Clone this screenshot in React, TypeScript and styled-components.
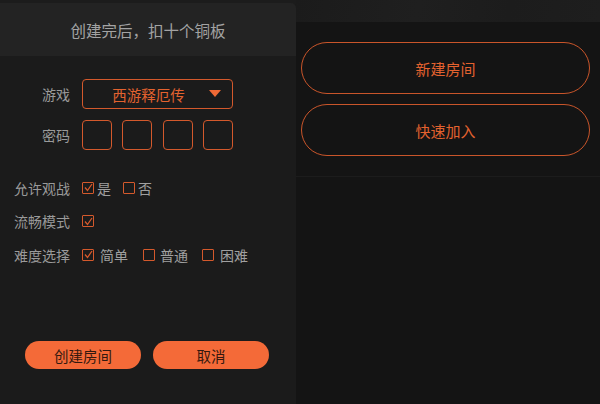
import React from "react"
import styled, { createGlobalStyle } from "styled-components"

const GlobalStyle = createGlobalStyle`
    html, body {
        margin: 0;
        padding: 0;
        background: #1c1c1c;
    }
    body {
        font-family: "Noto Sans CJK SC", "Noto Sans", sans-serif;
    }
    * {
        box-sizing: border-box;
    }
`

const Page = styled.div`
    width: 600px;
    height: 404px;
    overflow: hidden;
    background-color: #1c1c1c;

    display: flex;
    flex-flow: row nowrap;
`

// Left: create room panel
const CreatePanel = styled.div`
    width: 296px;
    margin-top: 3px;
    border-top-right-radius: 5px;
    overflow: hidden;
    background-color: #1b1b1b;

    display: flex;
    flex-flow: column;
`

const PanelHeader = styled.div`
    height: 53px;
    background-color: #232323;
    color: #a3a3a3;
    font-size: 15.5px;

    display: flex;
    align-items: center;
    justify-content: center;
`

const Form = styled.div`
    flex: 1;
    padding-top: 23px;

    display: flex;
    flex-flow: column;
`

const Row = styled.div<{ $height: number; $gap: number }>`
    height: ${p => p.$height}px;
    margin-bottom: ${p => p.$gap}px;

    display: flex;
    flex-flow: row nowrap;
    align-items: center;
`

const Label = styled.span`
    width: 70px;
    margin-right: 12px;
    text-align: right;
    color: #9a9a9a;
    font-size: 14px;
    white-space: nowrap;
`

const Select = styled.div`
    position: relative;
    width: 151px;
    height: 30px;
    padding-right: 18px;
    border: 1px solid #d4592c;
    border-radius: 4px;
    color: #e3622f;
    font-size: 14.5px;

    display: flex;
    align-items: center;
    justify-content: center;

    &::after {
        content: "";
        position: absolute;
        right: 11px;
        top: 10px;
        border-left: 6px solid transparent;
        border-right: 6px solid transparent;
        border-top: 7px solid #f06a36;
    }
`

const CodeBoxes = styled.div`
    display: flex;
    flex-flow: row nowrap;
    gap: 10.3px;
`

const CodeBox = styled.div`
    width: 30px;
    height: 30px;
    border: 1px solid #d4592c;
    border-radius: 4px;
`

const Option = styled.span<{ $gap: number; $after: number }>`
    margin-right: ${p => p.$after}px;
    color: #a0a0a0;
    font-size: 14px;

    display: flex;
    align-items: center;
    gap: ${p => p.$gap}px;
`

const Box = styled.span`
    width: 12px;
    height: 12px;
    border: 1.5px solid #d4592c;
    border-radius: 1px;

    display: flex;
    align-items: center;
    justify-content: center;

    & svg {
        width: 9px;
        height: 9px;
    }
`

const Actions = styled.div`
    margin-top: auto;
    padding: 0 0 35px 25px;

    display: flex;
    flex-flow: row nowrap;
    gap: 12px;
`

const FillButton = styled.button`
    width: 116px;
    height: 28px;
    border: none;
    border-radius: 14px;
    background-color: #f46a38;
    color: #34190f;
    font-family: inherit;
    font-size: 14.5px;
    padding: 0;
`

// Right: room entry
const SidePane = styled.div`
    flex: 1;

    display: flex;
    flex-flow: column;
`

const TopBand = styled.div`
    height: 22px;
    background: linear-gradient(100deg, #1b1b1b 0%, #1f1f1f 40%, #1c1c1c 70%, #1e1e1e 100%);
`

const SideBody = styled.div`
    flex: 1;
    background-color: #141414;
`

const EntrySection = styled.div`
    padding: 20px 10px 20px 5px;
    border-bottom: 1px solid #1c1c1c;

    display: flex;
    flex-flow: column;
    gap: 10px;
`

const OutlineButton = styled.button`
    height: 52px;
    border: 1.5px solid #c9552a;
    border-radius: 26px;
    background: transparent;
    color: #e3622f;
    font-family: inherit;
    font-size: 15px;
    padding: 0;
`

const Check = ({ checked }: { checked?: boolean }) => (
    <Box>
        {checked && (
            <svg viewBox="0 0 9 9" fill="none">
                <path d="M1 4.5 L3.5 7.5 L8 1" stroke="#d4592c" strokeWidth="1.3" />
            </svg>
        )}
    </Box>
)

export default function App() {
    return (
        <Page>
            <GlobalStyle />
            <CreatePanel>
                <PanelHeader>创建完后，扣十个铜板</PanelHeader>
                <Form>
                    <Row $height={30} $gap={10.5}>
                        <Label>游戏</Label>
                        <Select>西游释厄传</Select>
                    </Row>
                    <Row $height={30} $gap={28}>
                        <Label>密码</Label>
                        <CodeBoxes>
                            <CodeBox />
                            <CodeBox />
                            <CodeBox />
                            <CodeBox />
                        </CodeBoxes>
                    </Row>
                    <Row $height={20} $gap={13.5}>
                        <Label>允许观战</Label>
                        <Option $gap={3} $after={12}><Check checked />是</Option>
                        <Option $gap={3} $after={0}><Check />否</Option>
                    </Row>
                    <Row $height={20} $gap={13.5}>
                        <Label>流畅模式</Label>
                        <Option $gap={3} $after={0}><Check checked /></Option>
                    </Row>
                    <Row $height={20} $gap={0}>
                        <Label>难度选择</Label>
                        <Option $gap={6} $after={15}><Check checked />简单</Option>
                        <Option $gap={5} $after={14}><Check />普通</Option>
                        <Option $gap={6} $after={0}><Check />困难</Option>
                    </Row>
                </Form>
                <Actions>
                    <FillButton>创建房间</FillButton>
                    <FillButton>取消</FillButton>
                </Actions>
            </CreatePanel>
            <SidePane>
                <TopBand />
                <SideBody>
                    <EntrySection>
                        <OutlineButton>新建房间</OutlineButton>
                        <OutlineButton>快速加入</OutlineButton>
                    </EntrySection>
                </SideBody>
            </SidePane>
        </Page>
    )
}
